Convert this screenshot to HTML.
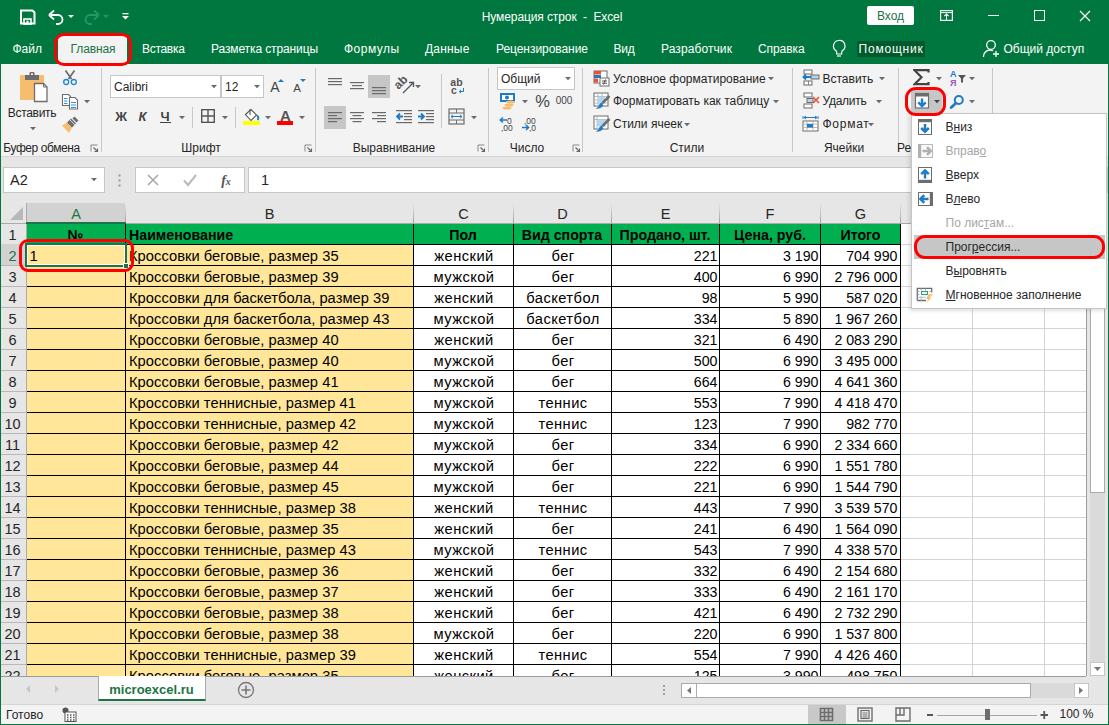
<!DOCTYPE html>
<html><head><meta charset="utf-8"><style>
html,body{margin:0;padding:0;width:1109px;height:725px;overflow:hidden;font-family:"Liberation Sans",sans-serif;}
body div, body svg{position:absolute;}
body div div{position:absolute;}
</style></head><body>
<div style="left:0px;top:0px;width:1109px;height:725px;background:#00773e;"></div>
<div style="left:252px;width:600px;text-align:center;top:8.84px;height:16px;line-height:16px;font-size:12px;color:#fff;font-weight:400;white-space:nowrap;font-family:'Liberation Sans', sans-serif;letter-spacing:-0.10px;">Нумерация строк&nbsp; -&nbsp; Excel</div>
<div style="left:12.5px;top:40.84px;height:16px;line-height:16px;font-size:12px;color:#fff;font-weight:400;white-space:nowrap;font-family:'Liberation Sans', sans-serif;letter-spacing:-0.00px;">Файл</div>
<div style="left:142px;top:40.84px;height:16px;line-height:16px;font-size:12px;color:#fff;font-weight:400;white-space:nowrap;font-family:'Liberation Sans', sans-serif;letter-spacing:-0.30px;">Вставка</div>
<div style="left:211px;top:40.84px;height:16px;line-height:16px;font-size:12px;color:#fff;font-weight:400;white-space:nowrap;font-family:'Liberation Sans', sans-serif;letter-spacing:-0.11px;">Разметка страницы</div>
<div style="left:344px;top:40.84px;height:16px;line-height:16px;font-size:12px;color:#fff;font-weight:400;white-space:nowrap;font-family:'Liberation Sans', sans-serif;letter-spacing:0.47px;">Формулы</div>
<div style="left:425px;top:40.84px;height:16px;line-height:16px;font-size:12px;color:#fff;font-weight:400;white-space:nowrap;font-family:'Liberation Sans', sans-serif;letter-spacing:0.19px;">Данные</div>
<div style="left:496px;top:40.84px;height:16px;line-height:16px;font-size:12px;color:#fff;font-weight:400;white-space:nowrap;font-family:'Liberation Sans', sans-serif;letter-spacing:-0.05px;">Рецензирование</div>
<div style="left:613.5px;top:40.84px;height:16px;line-height:16px;font-size:12px;color:#fff;font-weight:400;white-space:nowrap;font-family:'Liberation Sans', sans-serif;letter-spacing:-0.24px;">Вид</div>
<div style="left:661px;top:40.84px;height:16px;line-height:16px;font-size:12px;color:#fff;font-weight:400;white-space:nowrap;font-family:'Liberation Sans', sans-serif;letter-spacing:0.09px;">Разработчик</div>
<div style="left:758px;top:40.84px;height:16px;line-height:16px;font-size:12px;color:#fff;font-weight:400;white-space:nowrap;font-family:'Liberation Sans', sans-serif;letter-spacing:-0.08px;">Справка</div>
<div style="left:58px;top:36px;width:69px;height:28px;background:#f3f3f3;"></div>
<div style="left:70.5px;top:40.84px;height:16px;line-height:16px;font-size:12px;color:#217346;font-weight:400;white-space:nowrap;font-family:'Liberation Sans', sans-serif;letter-spacing:-0.10px;">Главная</div>
<div style="left:1px;top:64px;width:1107px;height:92px;background:#f3f3f3;"></div>
<div style="left:1px;top:156px;width:1107px;height:1px;background:#d5d5d5;"></div>
<svg style="left:19px;top:9px;" width="17" height="16" viewBox="0 0 17 16"><path d="M2 1.5h11.5l2 2v11h-13.5z" fill="none" stroke="#fff" stroke-width="2"/><rect x="5" y="10" width="7" height="5" fill="none" stroke="#fff" stroke-width="1.6"/><rect x="7.5" y="11.5" width="2" height="3.5" fill="#fff"/></svg>
<svg style="left:48px;top:9px;" width="17" height="16" viewBox="0 0 17 16"><path d="M3 6 H10 A4.5 4.5 0 0 1 10 15 H8" fill="none" stroke="#fff" stroke-width="1.8"/><path d="M1 6 L6 1.5 M1 6 L6 10.5" stroke="#fff" stroke-width="1.8" fill="none"/></svg>
<svg style="left:67px;top:14px;" width="8" height="5" viewBox="0 0 8 5"><polygon points="1,1 7,1 4,4" fill="#fff"/></svg>
<svg style="left:83px;top:9px;" width="17" height="16" viewBox="0 0 17 16"><path d="M14 6 H7 A4.5 4.5 0 0 0 7 15 H9" fill="none" stroke="#1f9a6a" stroke-width="1.8"/><path d="M16 6 L11 1.5 M16 6 L11 10.5" stroke="#1f9a6a" stroke-width="1.8" fill="none"/></svg>
<svg style="left:102px;top:14px;" width="8" height="5" viewBox="0 0 8 5"><polygon points="1,1 7,1 4,4" fill="#1f9a6a"/></svg>
<svg style="left:121px;top:12px;" width="9" height="9" viewBox="0 0 9 9"><rect x="1.5" y="1" width="6" height="1.3" fill="#fff"/><polygon points="1,4 8,4 4.5,7.5" fill="#fff"/></svg>
<div style="left:867px;top:6px;width:47px;height:19px;background:#fff;border-radius:2px"></div>
<div style="left:590.5px;width:600px;text-align:center;top:7.84px;height:16px;line-height:16px;font-size:12px;color:#217346;font-weight:400;white-space:nowrap;font-family:'Liberation Sans', sans-serif;">Вход</div>
<svg style="left:939px;top:9px;" width="15" height="13" viewBox="0 0 15 13"><rect x="1.6" y="1.6" width="11.8" height="9.8" fill="none" stroke="#fff" stroke-width="1.2"/><path d="M2 3.6h11" stroke="#fff" stroke-width="1"/><path d="M7.5 11.5V4.8M5.3 7.2L7.5 5l2.2 2.2" fill="none" stroke="#fff" stroke-width="1.1"/></svg>
<div style="left:988px;top:15px;width:11px;height:1px;background:#fff;"></div>
<div style="left:1034px;top:10px;width:11px;height:11px;box-sizing:border-box;border:1px solid #fff;background:transparent;"></div>
<svg style="left:1079px;top:10px;" width="12" height="12" viewBox="0 0 12 12"><path d="M1 1L11 11M11 1L1 11" stroke="#fff" stroke-width="1.2"/></svg>
<svg style="left:831px;top:39px;" width="16" height="19" viewBox="0 0 16 19"><path d="M8 1.5a5.5 5.5 0 0 0 -3.2 10c.6.5.9 1.2.9 2V15h5v-1.5c0-.8.3-1.5.9-2A5.5 5.5 0 0 0 8 1.5z" fill="none" stroke="#fff" stroke-width="1.2"/><path d="M6 17h4" stroke="#fff" stroke-width="1.2"/></svg>
<div style="left:857px;top:41px;width:68px;height:16px;background:#005a2c;"></div>
<div style="left:858.5px;top:40.84px;height:16px;line-height:16px;font-size:12px;color:#fff;font-weight:400;white-space:nowrap;font-family:'Liberation Sans', sans-serif;letter-spacing:0.79px;">Помощник</div>
<svg style="left:982px;top:39px;" width="19" height="19" viewBox="0 0 19 19"><circle cx="9" cy="6" r="4.3" fill="none" stroke="#fff" stroke-width="1.3"/><path d="M1.5 18c0-4 2.8-7 6.5-7 1.2 0 2.2.3 3 .8" fill="none" stroke="#fff" stroke-width="1.3"/><path d="M14 12v6M11 15h6" stroke="#fff" stroke-width="1.3"/></svg>
<div style="left:1003.5px;top:40.84px;height:16px;line-height:16px;font-size:12px;color:#fff;font-weight:400;white-space:nowrap;font-family:'Liberation Sans', sans-serif;">Общий доступ</div>
<div style="left:54px;top:33px;width:78px;height:33px;box-sizing:border-box;border:3px solid #ff0000;background:transparent;border-radius:10px"></div>
<div style="left:101px;top:68px;width:1px;height:84px;background:#c8c8c8;"></div>
<div style="left:315px;top:68px;width:1px;height:84px;background:#c8c8c8;"></div>
<div style="left:488px;top:68px;width:1px;height:84px;background:#c8c8c8;"></div>
<div style="left:582px;top:68px;width:1px;height:84px;background:#c8c8c8;"></div>
<div style="left:792px;top:68px;width:1px;height:84px;background:#c8c8c8;"></div>
<div style="left:898px;top:68px;width:1px;height:84px;background:#c8c8c8;"></div>
<div style="left:992px;top:68px;width:1px;height:84px;background:#c8c8c8;"></div>
<div style="left:-258.5px;width:600px;text-align:center;top:139.84px;height:16px;line-height:16px;font-size:12px;color:#262626;font-weight:400;white-space:nowrap;font-family:'Liberation Sans', sans-serif;letter-spacing:-0.42px;">Буфер обмена</div>
<div style="left:-99px;width:600px;text-align:center;top:139.84px;height:16px;line-height:16px;font-size:12px;color:#262626;font-weight:400;white-space:nowrap;font-family:'Liberation Sans', sans-serif;">Шрифт</div>
<div style="left:94px;width:600px;text-align:center;top:139.84px;height:16px;line-height:16px;font-size:12px;color:#262626;font-weight:400;white-space:nowrap;font-family:'Liberation Sans', sans-serif;">Выравнивание</div>
<div style="left:227px;width:600px;text-align:center;top:139.84px;height:16px;line-height:16px;font-size:12px;color:#262626;font-weight:400;white-space:nowrap;font-family:'Liberation Sans', sans-serif;">Число</div>
<div style="left:387px;width:600px;text-align:center;top:139.84px;height:16px;line-height:16px;font-size:12px;color:#262626;font-weight:400;white-space:nowrap;font-family:'Liberation Sans', sans-serif;">Стили</div>
<div style="left:544px;width:600px;text-align:center;top:139.84px;height:16px;line-height:16px;font-size:12px;color:#262626;font-weight:400;white-space:nowrap;font-family:'Liberation Sans', sans-serif;">Ячейки</div>
<div style="left:897px;top:139.84px;height:16px;line-height:16px;font-size:12px;color:#262626;font-weight:400;white-space:nowrap;font-family:'Liberation Sans', sans-serif;">Ре</div>
<svg style="left:89.5px;top:144px;" width="9" height="9" viewBox="0 0 9 9"><path d="M1 7.5V1h6.5" fill="none" stroke="#888" stroke-width="1"/><path d="M3.5 3.5L7.5 7.5M4.5 7.5h3v-3" fill="none" stroke="#666" stroke-width="1.1"/></svg>
<svg style="left:304px;top:144px;" width="9" height="9" viewBox="0 0 9 9"><path d="M1 7.5V1h6.5" fill="none" stroke="#888" stroke-width="1"/><path d="M3.5 3.5L7.5 7.5M4.5 7.5h3v-3" fill="none" stroke="#666" stroke-width="1.1"/></svg>
<svg style="left:477px;top:144px;" width="9" height="9" viewBox="0 0 9 9"><path d="M1 7.5V1h6.5" fill="none" stroke="#888" stroke-width="1"/><path d="M3.5 3.5L7.5 7.5M4.5 7.5h3v-3" fill="none" stroke="#666" stroke-width="1.1"/></svg>
<svg style="left:572px;top:144px;" width="9" height="9" viewBox="0 0 9 9"><path d="M1 7.5V1h6.5" fill="none" stroke="#888" stroke-width="1"/><path d="M3.5 3.5L7.5 7.5M4.5 7.5h3v-3" fill="none" stroke="#666" stroke-width="1.1"/></svg>
<svg style="left:19px;top:71px;" width="30" height="32" viewBox="0 0 30 32"><rect x="1" y="4" width="24" height="25" rx="1" fill="#f6bd6f"/><rect x="6" y="4" width="14" height="5" fill="#6d6d6d"/><rect x="10.5" y="1" width="5" height="4" rx="1" fill="#6d6d6d"/><rect x="12" y="2.3" width="2" height="1.6" fill="#f3f3f3"/><path d="M15.5 12.5h9l3.5 3.5v14.5h-12.5z" fill="#fff" stroke="#6d6d6d" stroke-width="1.3"/><path d="M24.5 12.5v3.5h3.5" fill="none" stroke="#6d6d6d" stroke-width="1"/></svg>
<div style="left:-268px;width:600px;text-align:center;top:104.84px;height:16px;line-height:16px;font-size:12px;color:#262626;font-weight:400;white-space:nowrap;font-family:'Liberation Sans', sans-serif;letter-spacing:-0.32px;">Вставить</div>
<svg style="left:29.5px;top:127px;" width="6" height="4" viewBox="0 0 6 4"><polygon points="0,0 6,0 3,3.2" fill="#6a6a6a"/></svg>
<svg style="left:62px;top:70px;" width="16" height="16" viewBox="0 0 16 16"><path d="M3.5 0.5L9.5 9M12.5 0.5L6.5 9" stroke="#6d6d6d" stroke-width="1.7"/><circle cx="4.2" cy="12" r="2.5" fill="none" stroke="#1e88d2" stroke-width="1.3"/><circle cx="11.8" cy="12" r="2.5" fill="none" stroke="#1e88d2" stroke-width="1.3"/></svg>
<svg style="left:61px;top:93px;" width="18" height="17" viewBox="0 0 18 17"><path d="M1.5 1.5h6l2 2v9h-8z" fill="#fff" stroke="#6d6d6d" stroke-width="1.1"/><path d="M3 5.5h3.5M3 8h3.5M3 10.5h3.5" stroke="#1e88d2" stroke-width="0.9"/><path d="M8.5 4.5h5.5l2.5 2.5v9h-8z" fill="#fff" stroke="#6d6d6d" stroke-width="1.1"/><path d="M10 9.5h5M10 12h5M10 14.5h5" stroke="#1e88d2" stroke-width="0.9"/></svg>
<svg style="left:84px;top:100px;" width="6" height="4" viewBox="0 0 6 4"><polygon points="0,0 6,0 3,3.2" fill="#6a6a6a"/></svg>
<svg style="left:61px;top:116px;" width="18" height="17" viewBox="0 0 18 17"><path d="M1 9.5l5-3 5 5-3 5.5z" fill="#f6bd6f"/><path d="M6 6.5l4-4 5 5-4 4z" fill="#6d6d6d"/><path d="M11.5 2.5l2-2 4 4-2 2z" fill="#6d6d6d"/><path d="M8.5 3.5l5.5 5.5" stroke="#f3f3f3" stroke-width="0.8"/></svg>
<div style="left:110px;top:75px;width:111px;height:23px;box-sizing:border-box;border:1px solid #c6c6c6;background:#fff;"></div>
<div style="left:114px;top:78.84px;height:16px;line-height:16px;font-size:12px;color:#262626;font-weight:400;white-space:nowrap;font-family:'Liberation Sans', sans-serif;">Calibri</div>
<svg style="left:211px;top:85px;" width="6" height="4" viewBox="0 0 6 4"><polygon points="0,0 6,0 3,3.2" fill="#6a6a6a"/></svg>
<div style="left:221px;top:75px;width:43px;height:23px;box-sizing:border-box;border:1px solid #c6c6c6;background:#fff;"></div>
<div style="left:225px;top:78.84px;height:16px;line-height:16px;font-size:12px;color:#262626;font-weight:400;white-space:nowrap;font-family:'Liberation Sans', sans-serif;">12</div>
<svg style="left:254px;top:85px;" width="6" height="4" viewBox="0 0 6 4"><polygon points="0,0 6,0 3,3.2" fill="#6a6a6a"/></svg>
<div style="left:-25px;width:600px;text-align:center;top:78.15px;height:18px;line-height:18px;font-size:14px;color:#444444;font-weight:400;white-space:nowrap;font-family:'Liberation Sans', sans-serif;">A</div>
<svg style="left:278px;top:79px;" width="6" height="4" viewBox="0 0 6 4"><polygon points="0,3 6,3 3,0" fill="#1e7bc6"/></svg>
<div style="left:-3px;width:600px;text-align:center;top:80.52px;height:15px;line-height:15px;font-size:11.5px;color:#444444;font-weight:400;white-space:nowrap;font-family:'Liberation Sans', sans-serif;">A</div>
<svg style="left:300px;top:79px;" width="6" height="4" viewBox="0 0 6 4"><polygon points="0,0 6,0 3,3" fill="#1e7bc6"/></svg>
<div style="left:-179px;width:600px;text-align:center;top:108.00px;height:17px;line-height:17px;font-size:13px;color:#444444;font-weight:700;white-space:nowrap;font-family:'Liberation Sans', sans-serif;">Ж</div>
<div style="left:-157.5px;width:600px;text-align:center;top:108.00px;height:17px;line-height:17px;font-size:13px;color:#444444;font-weight:700;white-space:nowrap;font-family:'Liberation Sans', sans-serif;font-style:italic">К</div>
<div style="left:-135px;width:600px;text-align:center;top:108.00px;height:17px;line-height:17px;font-size:13px;color:#444444;font-weight:700;white-space:nowrap;font-family:'Liberation Sans', sans-serif;">Ч</div>
<div style="left:160px;top:122px;width:11px;height:1.3px;background:#444444;"></div>
<svg style="left:179px;top:116px;" width="6" height="4" viewBox="0 0 6 4"><polygon points="0,0 6,0 3,3.2" fill="#6a6a6a"/></svg>
<div style="left:192px;top:107px;width:1px;height:21px;background:#c8c8c8;"></div>
<svg style="left:201px;top:109px;" width="14" height="14" viewBox="0 0 14 14"><rect x="0.7" y="0.7" width="12.6" height="12.6" fill="none" stroke="#555" stroke-width="1.4"/><path d="M7 1v12M1 7h12" stroke="#555" stroke-width="1.4"/></svg>
<svg style="left:222px;top:116px;" width="6" height="4" viewBox="0 0 6 4"><polygon points="0,0 6,0 3,3.2" fill="#6a6a6a"/></svg>
<div style="left:235px;top:107px;width:1px;height:21px;background:#c8c8c8;"></div>
<svg style="left:243px;top:108px;" width="18" height="18" viewBox="0 0 18 18"><path d="M2.5 6.5l5.5-5 5.5 5.5-5.5 5.5z" fill="#fff" stroke="#555" stroke-width="1.1"/><path d="M7 1v6" stroke="#555" stroke-width="1.1"/><path d="M14 7.5c1.5 1 1.8 3 .6 4.5" fill="none" stroke="#1e7bc6" stroke-width="2"/><rect x="0" y="13" width="17" height="4" fill="#ffff00"/></svg>
<svg style="left:265px;top:116px;" width="6" height="4" viewBox="0 0 6 4"><polygon points="0,0 6,0 3,3.2" fill="#6a6a6a"/></svg>
<div style="left:-14.5px;width:600px;text-align:center;top:105.80px;height:20px;line-height:20px;font-size:15px;color:#555;font-weight:700;white-space:nowrap;font-family:'Liberation Sans', sans-serif;">A</div>
<div style="left:277px;top:121px;width:16px;height:4px;background:#ff0000;"></div>
<svg style="left:299px;top:116px;" width="6" height="4" viewBox="0 0 6 4"><polygon points="0,0 6,0 3,3.2" fill="#6a6a6a"/></svg>
<svg style="left:328px;top:78px;" width="14" height="10" viewBox="0 0 14 10"><rect x="0" y="0" width="14" height="1.2" fill="#6a6a6a"/><rect x="0" y="3" width="14" height="1.2" fill="#6a6a6a"/><rect x="0" y="6" width="14" height="1.2" fill="#6a6a6a"/></svg>
<svg style="left:350px;top:82px;" width="14" height="10" viewBox="0 0 14 10"><rect x="0.0" y="0" width="14" height="1.2" fill="#6a6a6a"/><rect x="2.0" y="3" width="10" height="1.2" fill="#6a6a6a"/><rect x="0.0" y="6" width="14" height="1.2" fill="#6a6a6a"/></svg>
<div style="left:368px;top:75px;width:22px;height:23px;background:#c6c6c6;"></div>
<svg style="left:372px;top:87px;" width="14" height="10" viewBox="0 0 14 10"><rect x="0" y="0" width="14" height="1.2" fill="#6a6a6a"/><rect x="0" y="3" width="14" height="1.2" fill="#6a6a6a"/><rect x="0" y="6" width="14" height="1.2" fill="#6a6a6a"/></svg>
<svg style="left:394px;top:73px;" width="22" height="22" viewBox="0 0 22 22"><text x="0" y="0" transform="translate(4.5,17) rotate(-45)" font-family="Liberation Sans" font-size="12" font-weight="700" fill="#555">ab</text><path d="M9 20L19 10M15 9.5H19.5v4.5" fill="none" stroke="#555" stroke-width="1.3"/></svg>
<svg style="left:415px;top:85px;" width="6" height="4" viewBox="0 0 6 4"><polygon points="0,0 6,0 3,3.2" fill="#6a6a6a"/></svg>
<div style="left:324px;top:106px;width:22px;height:23px;background:#c6c6c6;"></div>
<svg style="left:328px;top:112px;" width="14" height="13" viewBox="0 0 14 13"><rect x="0" y="0" width="14" height="1.2" fill="#6a6a6a"/><rect x="0" y="3" width="9" height="1.2" fill="#6a6a6a"/><rect x="0" y="6" width="14" height="1.2" fill="#6a6a6a"/><rect x="0" y="9" width="9" height="1.2" fill="#6a6a6a"/></svg>
<svg style="left:350px;top:112px;" width="14" height="13" viewBox="0 0 14 13"><rect x="0.0" y="0" width="14" height="1.2" fill="#6a6a6a"/><rect x="2.5" y="3" width="9" height="1.2" fill="#6a6a6a"/><rect x="0.0" y="6" width="14" height="1.2" fill="#6a6a6a"/><rect x="2.5" y="9" width="9" height="1.2" fill="#6a6a6a"/></svg>
<svg style="left:372px;top:112px;" width="14" height="13" viewBox="0 0 14 13"><rect x="0" y="0" width="14" height="1.2" fill="#6a6a6a"/><rect x="5" y="3" width="9" height="1.2" fill="#6a6a6a"/><rect x="0" y="6" width="14" height="1.2" fill="#6a6a6a"/><rect x="5" y="9" width="9" height="1.2" fill="#6a6a6a"/></svg>
<svg style="left:396px;top:109px;" width="17" height="15" viewBox="0 0 17 15"><rect x="0" y="1" width="16" height="1.2" fill="#6a6a6a"/><rect x="8" y="4" width="8" height="1.2" fill="#6a6a6a"/><rect x="8" y="7" width="8" height="1.2" fill="#6a6a6a"/><rect x="8" y="10" width="8" height="1.2" fill="#6a6a6a"/><rect x="0" y="13" width="16" height="1.2" fill="#6a6a6a"/><path d="M1 7.5h6M4 4.5l-3 3 3 3" fill="none" stroke="#1e7bc6" stroke-width="1.8"/></svg>
<svg style="left:418px;top:109px;" width="17" height="15" viewBox="0 0 17 15"><rect x="0" y="1" width="16" height="1.2" fill="#6a6a6a"/><rect x="8" y="4" width="8" height="1.2" fill="#6a6a6a"/><rect x="8" y="7" width="8" height="1.2" fill="#6a6a6a"/><rect x="8" y="10" width="8" height="1.2" fill="#6a6a6a"/><rect x="0" y="13" width="16" height="1.2" fill="#6a6a6a"/><path d="M0 7.5h6M3 4.5l3 3-3 3" fill="none" stroke="#1e7bc6" stroke-width="1.8"/></svg>
<div style="left:441px;top:74px;width:1px;height:54px;background:#c8c8c8;"></div>
<div style="left:156.5px;width:600px;text-align:center;top:74.86px;height:14px;line-height:14px;font-size:10.5px;color:#555;font-weight:700;white-space:nowrap;font-family:'Liberation Sans', sans-serif;">ab</div>
<div style="left:154px;width:600px;text-align:center;top:82.86px;height:14px;line-height:14px;font-size:10.5px;color:#555;font-weight:700;white-space:nowrap;font-family:'Liberation Sans', sans-serif;">c</div>
<svg style="left:458px;top:88px;" width="7" height="6" viewBox="0 0 7 6"><path d="M5.5 0v3.5H1.5M3 1.8L1.2 3.5 3 5.2" fill="none" stroke="#1e7bc6" stroke-width="1"/></svg>
<svg style="left:448px;top:108px;" width="17" height="17" viewBox="0 0 17 17"><rect x="1" y="1" width="15" height="15" fill="none" stroke="#6d6d6d" stroke-width="1.2"/><path d="M1 5h15M1 12h15M8.5 1v4M8.5 12v4" stroke="#6d6d6d" stroke-width="1"/><path d="M3 8.5h11M5 6.8L3 8.5 5 10.2M12 6.8l2 1.7-2 1.7" fill="none" stroke="#1e7bc6" stroke-width="1"/></svg>
<svg style="left:471px;top:116px;" width="6" height="4" viewBox="0 0 6 4"><polygon points="0,0 6,0 3,3.2" fill="#6a6a6a"/></svg>
<div style="left:497px;top:67px;width:78px;height:23px;box-sizing:border-box;border:1px solid #c6c6c6;background:#fff;"></div>
<div style="left:501px;top:70.84px;height:16px;line-height:16px;font-size:12px;color:#262626;font-weight:400;white-space:nowrap;font-family:'Liberation Sans', sans-serif;">Общий</div>
<svg style="left:565px;top:77px;" width="6" height="4" viewBox="0 0 6 4"><polygon points="0,0 6,0 3,3.2" fill="#6a6a6a"/></svg>
<svg style="left:499px;top:92px;" width="18" height="18" viewBox="0 0 18 18"><rect x="1" y="1" width="15" height="9" fill="#1e7bc6"/><rect x="3" y="3" width="11" height="5" fill="#fff"/><circle cx="8" cy="5.5" r="2" fill="#1e7bc6"/><ellipse cx="11.5" cy="10" rx="4.5" ry="1.5" fill="#f6bd6f"/><ellipse cx="10" cy="13" rx="4.5" ry="1.5" fill="#f6bd6f"/><ellipse cx="8" cy="16" rx="4.5" ry="1.5" fill="#f6bd6f"/></svg>
<svg style="left:522px;top:100px;" width="6" height="4" viewBox="0 0 6 4"><polygon points="0,0 6,0 3,3.2" fill="#6a6a6a"/></svg>
<div style="left:242.5px;width:600px;text-align:center;top:91.28px;height:21px;line-height:21px;font-size:16.5px;color:#444;font-weight:400;white-space:nowrap;font-family:'Liberation Sans', sans-serif;">%</div>
<div style="left:264px;width:600px;text-align:center;top:94.03px;height:13px;line-height:13px;font-size:10px;color:#444;font-weight:400;white-space:nowrap;font-family:'Liberation Sans', sans-serif;">000</div>
<svg style="left:499px;top:116px;" width="17" height="16" viewBox="0 0 17 16"><path d="M1 4h7M4 1.5L1.2 4 4 6.5" fill="none" stroke="#1e7bc6" stroke-width="1.5"/><text x="8" y="8" font-family="Liberation Sans" font-size="8.5" fill="#444">0</text><text x="2" y="15" font-family="Liberation Sans" font-size="8.5" fill="#444">,00</text></svg>
<svg style="left:521px;top:116px;" width="17" height="16" viewBox="0 0 17 16"><text x="3" y="8" font-family="Liberation Sans" font-size="8.5" fill="#444">,00</text><path d="M1 11.5h6M5 9l2.6 2.5L5 14" fill="none" stroke="#1e7bc6" stroke-width="1.5"/><text x="8" y="15" font-family="Liberation Sans" font-size="8.5" fill="#444">,0</text></svg>
<svg style="left:593px;top:70px;" width="18" height="17" viewBox="0 0 18 17"><rect x="1" y="1" width="13" height="12" fill="#fff" stroke="#6d6d6d" stroke-width="1"/><rect x="1" y="1" width="7" height="3.5" fill="#f05032"/><rect x="1" y="5" width="7" height="3" fill="#1e7bc6"/><rect x="1" y="8.5" width="4" height="4" fill="#f05032"/><rect x="7" y="8" width="9" height="8" fill="#fff" stroke="#6d6d6d" stroke-width="1"/><path d="M9 11h5M9 13.2h5M12.5 9.5l-2 5" stroke="#444" stroke-width="0.9"/></svg>
<div style="left:613px;top:70.84px;height:16px;line-height:16px;font-size:12px;color:#262626;font-weight:400;white-space:nowrap;font-family:'Liberation Sans', sans-serif;">Условное форматирование</div>
<svg style="left:768px;top:77px;" width="6" height="4" viewBox="0 0 6 4"><polygon points="0,0 6,0 3,3.2" fill="#6a6a6a"/></svg>
<svg style="left:593px;top:92px;" width="18" height="18" viewBox="0 0 18 18"><rect x="1" y="1" width="14" height="13" fill="#fff" stroke="#6d6d6d" stroke-width="1"/><path d="M1 4.5h14M1 8h14M1 11h14M5 1v13M9 1v13" stroke="#aaa" stroke-width="0.8"/><rect x="5" y="4.5" width="7" height="6" fill="#b4d4ef"/><path d="M16.5 4l-7 7" stroke="#6d6d6d" stroke-width="2.5"/><path d="M9.5 10.5c-2 0-3.5 1.5-3.5 3.5-1 1-2 2-3.5 2.5 3 .5 6-.5 7.5-2.5z" fill="#1e7bc6"/></svg>
<div style="left:613px;top:93.34px;height:16px;line-height:16px;font-size:12px;color:#262626;font-weight:400;white-space:nowrap;font-family:'Liberation Sans', sans-serif;">Форматировать как таблицу</div>
<svg style="left:773px;top:100px;" width="6" height="4" viewBox="0 0 6 4"><polygon points="0,0 6,0 3,3.2" fill="#6a6a6a"/></svg>
<svg style="left:593px;top:115px;" width="18" height="18" viewBox="0 0 18 18"><rect x="1" y="1" width="14" height="13" fill="#fff" stroke="#6d6d6d" stroke-width="1"/><path d="M1 4.5h14M4 1v13" stroke="#aaa" stroke-width="0.8"/><rect x="4" y="4.5" width="9" height="7" fill="#b4d4ef"/><path d="M16.5 4l-7 7" stroke="#6d6d6d" stroke-width="2.5"/><path d="M9.5 10.5c-2 0-3.5 1.5-3.5 3.5-1 1-2 2-3.5 2.5 3 .5 6-.5 7.5-2.5z" fill="#1e7bc6"/></svg>
<div style="left:613px;top:115.84px;height:16px;line-height:16px;font-size:12px;color:#262626;font-weight:400;white-space:nowrap;font-family:'Liberation Sans', sans-serif;">Стили ячеек</div>
<svg style="left:684px;top:123px;" width="6" height="4" viewBox="0 0 6 4"><polygon points="0,0 6,0 3,3.2" fill="#6a6a6a"/></svg>
<svg style="left:802px;top:69px;" width="18" height="18" viewBox="0 0 18 18"><rect x="2" y="1" width="8" height="4" fill="#fff" stroke="#6d6d6d" stroke-width="1"/><rect x="2" y="12" width="8" height="4" fill="#fff" stroke="#6d6d6d" stroke-width="1"/><rect x="6" y="12" width="0.8" height="4" fill="#6d6d6d"/><rect x="9" y="6" width="8" height="4" fill="#b4d4ef" stroke="#6d6d6d" stroke-width="1"/><path d="M9 8H1.5M4 5.5L1.5 8 4 10.5" fill="none" stroke="#1e7bc6" stroke-width="1.8"/></svg>
<div style="left:822.5px;top:70.84px;height:16px;line-height:16px;font-size:12px;color:#262626;font-weight:400;white-space:nowrap;font-family:'Liberation Sans', sans-serif;">Вставить</div>
<svg style="left:879px;top:77px;" width="6" height="4" viewBox="0 0 6 4"><polygon points="0,0 6,0 3,3.2" fill="#6a6a6a"/></svg>
<svg style="left:802px;top:92px;" width="18" height="18" viewBox="0 0 18 18"><rect x="2" y="1" width="8" height="4" fill="#fff" stroke="#6d6d6d" stroke-width="1"/><rect x="2" y="12" width="8" height="4" fill="#fff" stroke="#6d6d6d" stroke-width="1"/><rect x="5" y="6.5" width="6" height="4" fill="#b4d4ef" stroke="#6d6d6d" stroke-width="1"/><path d="M11 5l6 6M17 5l-6 6" stroke="#f05032" stroke-width="1.6"/></svg>
<div style="left:822.5px;top:93.34px;height:16px;line-height:16px;font-size:12px;color:#262626;font-weight:400;white-space:nowrap;font-family:'Liberation Sans', sans-serif;letter-spacing:-0.26px;">Удалить</div>
<svg style="left:876px;top:100px;" width="6" height="4" viewBox="0 0 6 4"><polygon points="0,0 6,0 3,3.2" fill="#6a6a6a"/></svg>
<svg style="left:802px;top:115px;" width="18" height="18" viewBox="0 0 18 18"><path d="M1 1v3M16 1v3M2 2.5h13M4 1l-2 1.5L4 4M13 1l2 1.5L13 4" fill="none" stroke="#1e7bc6" stroke-width="1"/><rect x="1" y="6" width="15" height="10" fill="#fff" stroke="#6d6d6d" stroke-width="1"/><path d="M1 9h15M1 12.5h15M5 6v10M11 6v10" stroke="#aaa" stroke-width="0.8"/><rect x="5" y="9" width="6" height="3.5" fill="#1e7bc6"/></svg>
<div style="left:822.5px;top:115.84px;height:16px;line-height:16px;font-size:12px;color:#262626;font-weight:400;white-space:nowrap;font-family:'Liberation Sans', sans-serif;letter-spacing:0.73px;">Формат</div>
<svg style="left:868px;top:123px;" width="6" height="4" viewBox="0 0 6 4"><polygon points="0,0 6,0 3,3.2" fill="#6a6a6a"/></svg>
<svg style="left:913px;top:69px;" width="17" height="17" viewBox="0 0 17 17"><path d="M15.5 3.5V1.2H1.5L8.5 8.2 1.5 15.2h14v-2.3" fill="none" stroke="#444" stroke-width="2.2" stroke-linejoin="miter"/></svg>
<svg style="left:936px;top:77px;" width="6" height="4" viewBox="0 0 6 4"><polygon points="0,0 6,0 3,3.2" fill="#6a6a6a"/></svg>
<svg style="left:948px;top:68px;" width="20" height="19" viewBox="0 0 20 19"><text x="2" y="9" font-family="Liberation Sans" font-size="9" font-weight="700" fill="#1e7bc6">A</text><text x="2" y="17.5" font-family="Liberation Sans" font-size="9" font-weight="700" fill="#9b59b6">Я</text><path d="M10 7h8l-3 3.5v4h-2v-4z" fill="#555"/></svg>
<svg style="left:969px;top:77px;" width="6" height="4" viewBox="0 0 6 4"><polygon points="0,0 6,0 3,3.2" fill="#6a6a6a"/></svg>
<div style="left:911px;top:90px;width:31px;height:23px;background:#c6c6c6;border-radius:3px"></div>
<svg style="left:914px;top:92px;" width="16" height="17" viewBox="0 0 16 17"><rect x="1.5" y="1.5" width="13" height="14.5" fill="#fff" stroke="#6d6d6d" stroke-width="1.2"/><rect x="1" y="1" width="14" height="3.5" fill="#6d6d6d"/><path d="M8 6.5v7.5M4.3 10.3L8 14l3.7-3.7" fill="none" stroke="#1e7bc6" stroke-width="2.4"/></svg>
<svg style="left:933.5px;top:100px;" width="6" height="4" viewBox="0 0 6 4"><polygon points="0,0 6,0 3,3.2" fill="#444"/></svg>
<svg style="left:949px;top:94px;" width="16" height="15" viewBox="0 0 16 15"><circle cx="9.8" cy="6" r="4" fill="none" stroke="#1e7bc6" stroke-width="2"/><path d="M6.8 9.2L2.2 13.5" stroke="#1e7bc6" stroke-width="2.8" stroke-linecap="round"/></svg>
<svg style="left:969px;top:100px;" width="6" height="4" viewBox="0 0 6 4"><polygon points="0,0 6,0 3,3.2" fill="#6a6a6a"/></svg>
<div style="left:1px;top:157px;width:1107px;height:46px;background:#e6e6e6;"></div>
<div style="left:3px;top:167px;width:102px;height:26px;box-sizing:border-box;border:1px solid #c6c6c6;background:#fff;"></div>
<div style="left:10px;top:171.48px;height:19px;line-height:19px;font-size:14.5px;color:#262626;font-weight:400;white-space:nowrap;font-family:'Liberation Sans', sans-serif;">A2</div>
<svg style="left:91px;top:178px;" width="6" height="4" viewBox="0 0 6 4"><polygon points="0,0 6,0 3,3.2" fill="#6a6a6a"/></svg>
<svg style="left:118px;top:174px;" width="4" height="13" viewBox="0 0 4 13"><rect x="0.5" y="0.5" width="2" height="2" fill="#999"/><rect x="0.5" y="5.5" width="2" height="2" fill="#999"/><rect x="0.5" y="10.5" width="2" height="2" fill="#999"/></svg>
<div style="left:135px;top:167px;width:110px;height:26px;box-sizing:border-box;border:1px solid #c6c6c6;background:#fff;"></div>
<svg style="left:146px;top:173px;" width="14" height="14" viewBox="0 0 14 14"><path d="M2 2L12 12M12 2L2 12" stroke="#a6a6a6" stroke-width="1.5"/></svg>
<svg style="left:182px;top:173px;" width="16" height="14" viewBox="0 0 16 14"><path d="M2 7.5l4 4.5L14 2" fill="none" stroke="#bdbdbd" stroke-width="2.2"/></svg>
<div style="left:-74px;width:600px;text-align:center;top:172.15px;height:18px;line-height:18px;font-size:14px;color:#555;font-weight:700;white-space:nowrap;font-family:'Liberation Serif', serif;"><i>f</i><span style="font-size:10px;position:static"><i>x</i></span></div>
<div style="left:248px;top:167px;width:860px;height:26px;box-sizing:border-box;border:1px solid #c6c6c6;background:#fff;"></div>
<div style="left:261px;top:171.48px;height:19px;line-height:19px;font-size:14.5px;color:#262626;font-weight:400;white-space:nowrap;font-family:'Liberation Sans', sans-serif;">1</div>
<div style="left:1px;top:203px;width:1085px;height:473px;background:#fff;"></div>
<div style="left:1px;top:203px;width:1085px;height:20px;background:#e6e6e6;"></div>
<div style="left:1px;top:203px;width:25px;height:473px;background:#e6e6e6;"></div>
<div style="left:26px;top:223px;width:875px;height:21px;background:#00b050;"></div>
<div style="left:26px;top:244px;width:387px;height:432px;background:#ffe699;"></div>
<div style="left:972px;top:223px;width:1px;height:453px;background:#d4d4d4;"></div>
<div style="left:1044px;top:223px;width:1px;height:453px;background:#d4d4d4;"></div>
<div style="left:901px;top:244px;width:185px;height:1px;background:#d4d4d4;"></div>
<div style="left:901px;top:265px;width:185px;height:1px;background:#d4d4d4;"></div>
<div style="left:901px;top:286px;width:185px;height:1px;background:#d4d4d4;"></div>
<div style="left:901px;top:307px;width:185px;height:1px;background:#d4d4d4;"></div>
<div style="left:901px;top:328px;width:185px;height:1px;background:#d4d4d4;"></div>
<div style="left:901px;top:349px;width:185px;height:1px;background:#d4d4d4;"></div>
<div style="left:901px;top:370px;width:185px;height:1px;background:#d4d4d4;"></div>
<div style="left:901px;top:391px;width:185px;height:1px;background:#d4d4d4;"></div>
<div style="left:901px;top:412px;width:185px;height:1px;background:#d4d4d4;"></div>
<div style="left:901px;top:433px;width:185px;height:1px;background:#d4d4d4;"></div>
<div style="left:901px;top:454px;width:185px;height:1px;background:#d4d4d4;"></div>
<div style="left:901px;top:475px;width:185px;height:1px;background:#d4d4d4;"></div>
<div style="left:901px;top:496px;width:185px;height:1px;background:#d4d4d4;"></div>
<div style="left:901px;top:517px;width:185px;height:1px;background:#d4d4d4;"></div>
<div style="left:901px;top:538px;width:185px;height:1px;background:#d4d4d4;"></div>
<div style="left:901px;top:559px;width:185px;height:1px;background:#d4d4d4;"></div>
<div style="left:901px;top:580px;width:185px;height:1px;background:#d4d4d4;"></div>
<div style="left:901px;top:601px;width:185px;height:1px;background:#d4d4d4;"></div>
<div style="left:901px;top:622px;width:185px;height:1px;background:#d4d4d4;"></div>
<div style="left:901px;top:643px;width:185px;height:1px;background:#d4d4d4;"></div>
<div style="left:901px;top:664px;width:185px;height:1px;background:#d4d4d4;"></div>
<div style="left:901px;top:244px;width:185px;height:1px;background:#d4d4d4;"></div>
<div style="left:125px;top:223px;width:1px;height:453px;background:#000;"></div>
<div style="left:413px;top:223px;width:1px;height:453px;background:#000;"></div>
<div style="left:513px;top:223px;width:1px;height:453px;background:#000;"></div>
<div style="left:611px;top:223px;width:1px;height:453px;background:#000;"></div>
<div style="left:719px;top:223px;width:1px;height:453px;background:#000;"></div>
<div style="left:820px;top:223px;width:1px;height:453px;background:#000;"></div>
<div style="left:900px;top:223px;width:1px;height:453px;background:#000;"></div>
<div style="left:26px;top:244px;width:875px;height:1px;background:#000;"></div>
<div style="left:26px;top:265px;width:875px;height:1px;background:#000;"></div>
<div style="left:26px;top:286px;width:875px;height:1px;background:#000;"></div>
<div style="left:26px;top:307px;width:875px;height:1px;background:#000;"></div>
<div style="left:26px;top:328px;width:875px;height:1px;background:#000;"></div>
<div style="left:26px;top:349px;width:875px;height:1px;background:#000;"></div>
<div style="left:26px;top:370px;width:875px;height:1px;background:#000;"></div>
<div style="left:26px;top:391px;width:875px;height:1px;background:#000;"></div>
<div style="left:26px;top:412px;width:875px;height:1px;background:#000;"></div>
<div style="left:26px;top:433px;width:875px;height:1px;background:#000;"></div>
<div style="left:26px;top:454px;width:875px;height:1px;background:#000;"></div>
<div style="left:26px;top:475px;width:875px;height:1px;background:#000;"></div>
<div style="left:26px;top:496px;width:875px;height:1px;background:#000;"></div>
<div style="left:26px;top:517px;width:875px;height:1px;background:#000;"></div>
<div style="left:26px;top:538px;width:875px;height:1px;background:#000;"></div>
<div style="left:26px;top:559px;width:875px;height:1px;background:#000;"></div>
<div style="left:26px;top:580px;width:875px;height:1px;background:#000;"></div>
<div style="left:26px;top:601px;width:875px;height:1px;background:#000;"></div>
<div style="left:26px;top:622px;width:875px;height:1px;background:#000;"></div>
<div style="left:26px;top:643px;width:875px;height:1px;background:#000;"></div>
<div style="left:26px;top:664px;width:875px;height:1px;background:#000;"></div>
<div style="left:1px;top:223px;width:1085px;height:1px;background:#ababab;"></div>
<div style="left:26px;top:203px;width:1px;height:473px;background:#ababab;"></div>
<div style="left:125px;top:203px;width:1px;height:20px;background:linear-gradient(#e6e6e6,#9f9f9f);"></div>
<div style="left:413px;top:203px;width:1px;height:20px;background:linear-gradient(#e6e6e6,#9f9f9f);"></div>
<div style="left:513px;top:203px;width:1px;height:20px;background:linear-gradient(#e6e6e6,#9f9f9f);"></div>
<div style="left:611px;top:203px;width:1px;height:20px;background:linear-gradient(#e6e6e6,#9f9f9f);"></div>
<div style="left:719px;top:203px;width:1px;height:20px;background:linear-gradient(#e6e6e6,#9f9f9f);"></div>
<div style="left:820px;top:203px;width:1px;height:20px;background:linear-gradient(#e6e6e6,#9f9f9f);"></div>
<div style="left:900px;top:203px;width:1px;height:20px;background:linear-gradient(#e6e6e6,#9f9f9f);"></div>
<div style="left:972px;top:203px;width:1px;height:20px;background:linear-gradient(#e6e6e6,#9f9f9f);"></div>
<div style="left:1044px;top:203px;width:1px;height:20px;background:linear-gradient(#e6e6e6,#9f9f9f);"></div>
<div style="left:1px;top:244px;width:25px;height:1px;background:#b8b8b8;"></div>
<div style="left:1px;top:265px;width:25px;height:1px;background:#b8b8b8;"></div>
<div style="left:1px;top:286px;width:25px;height:1px;background:#b8b8b8;"></div>
<div style="left:1px;top:307px;width:25px;height:1px;background:#b8b8b8;"></div>
<div style="left:1px;top:328px;width:25px;height:1px;background:#b8b8b8;"></div>
<div style="left:1px;top:349px;width:25px;height:1px;background:#b8b8b8;"></div>
<div style="left:1px;top:370px;width:25px;height:1px;background:#b8b8b8;"></div>
<div style="left:1px;top:391px;width:25px;height:1px;background:#b8b8b8;"></div>
<div style="left:1px;top:412px;width:25px;height:1px;background:#b8b8b8;"></div>
<div style="left:1px;top:433px;width:25px;height:1px;background:#b8b8b8;"></div>
<div style="left:1px;top:454px;width:25px;height:1px;background:#b8b8b8;"></div>
<div style="left:1px;top:475px;width:25px;height:1px;background:#b8b8b8;"></div>
<div style="left:1px;top:496px;width:25px;height:1px;background:#b8b8b8;"></div>
<div style="left:1px;top:517px;width:25px;height:1px;background:#b8b8b8;"></div>
<div style="left:1px;top:538px;width:25px;height:1px;background:#b8b8b8;"></div>
<div style="left:1px;top:559px;width:25px;height:1px;background:#b8b8b8;"></div>
<div style="left:1px;top:580px;width:25px;height:1px;background:#b8b8b8;"></div>
<div style="left:1px;top:601px;width:25px;height:1px;background:#b8b8b8;"></div>
<div style="left:1px;top:622px;width:25px;height:1px;background:#b8b8b8;"></div>
<div style="left:1px;top:643px;width:25px;height:1px;background:#b8b8b8;"></div>
<div style="left:1px;top:664px;width:25px;height:1px;background:#b8b8b8;"></div>
<div style="left:27px;top:203px;width:98px;height:20px;background:#d2d2d2;"></div>
<div style="left:26px;top:222px;width:100px;height:2px;background:#217346;"></div>
<div style="left:1px;top:244px;width:25px;height:21px;background:#d2d2d2;"></div>
<svg style="left:1px;top:203px;" width="25" height="20" viewBox="0 0 25 20"><polygon points="22,4 22,17 9,17" fill="#b8b8b8"/></svg>
<div style="left:-224.0px;width:600px;text-align:center;top:205.48px;height:19px;line-height:19px;font-size:14.5px;color:#217346;font-weight:400;white-space:nowrap;font-family:'Liberation Sans', sans-serif;">A</div>
<div style="left:-30.5px;width:600px;text-align:center;top:205.48px;height:19px;line-height:19px;font-size:14.5px;color:#262626;font-weight:400;white-space:nowrap;font-family:'Liberation Sans', sans-serif;">B</div>
<div style="left:163.5px;width:600px;text-align:center;top:205.48px;height:19px;line-height:19px;font-size:14.5px;color:#262626;font-weight:400;white-space:nowrap;font-family:'Liberation Sans', sans-serif;">C</div>
<div style="left:262.5px;width:600px;text-align:center;top:205.48px;height:19px;line-height:19px;font-size:14.5px;color:#262626;font-weight:400;white-space:nowrap;font-family:'Liberation Sans', sans-serif;">D</div>
<div style="left:365.5px;width:600px;text-align:center;top:205.48px;height:19px;line-height:19px;font-size:14.5px;color:#262626;font-weight:400;white-space:nowrap;font-family:'Liberation Sans', sans-serif;">E</div>
<div style="left:470.0px;width:600px;text-align:center;top:205.48px;height:19px;line-height:19px;font-size:14.5px;color:#262626;font-weight:400;white-space:nowrap;font-family:'Liberation Sans', sans-serif;">F</div>
<div style="left:560.5px;width:600px;text-align:center;top:205.48px;height:19px;line-height:19px;font-size:14.5px;color:#262626;font-weight:400;white-space:nowrap;font-family:'Liberation Sans', sans-serif;">G</div>
<div style="left:636.5px;width:600px;text-align:center;top:205.48px;height:19px;line-height:19px;font-size:14.5px;color:#262626;font-weight:400;white-space:nowrap;font-family:'Liberation Sans', sans-serif;">H</div>
<div style="left:708.5px;width:600px;text-align:center;top:205.48px;height:19px;line-height:19px;font-size:14.5px;color:#262626;font-weight:400;white-space:nowrap;font-family:'Liberation Sans', sans-serif;">I</div>
<div style="left:765.5px;width:600px;text-align:center;top:205.48px;height:19px;line-height:19px;font-size:14.5px;color:#262626;font-weight:400;white-space:nowrap;font-family:'Liberation Sans', sans-serif;">J</div>
<div style="left:-287.5px;width:600px;text-align:center;top:225.98px;height:19px;line-height:19px;font-size:14.5px;color:#262626;font-weight:400;white-space:nowrap;font-family:'Liberation Sans', sans-serif;">1</div>
<div style="left:-287.5px;width:600px;text-align:center;top:246.98px;height:19px;line-height:19px;font-size:14.5px;color:#217346;font-weight:400;white-space:nowrap;font-family:'Liberation Sans', sans-serif;">2</div>
<div style="left:-287.5px;width:600px;text-align:center;top:267.98px;height:19px;line-height:19px;font-size:14.5px;color:#262626;font-weight:400;white-space:nowrap;font-family:'Liberation Sans', sans-serif;">3</div>
<div style="left:-287.5px;width:600px;text-align:center;top:288.98px;height:19px;line-height:19px;font-size:14.5px;color:#262626;font-weight:400;white-space:nowrap;font-family:'Liberation Sans', sans-serif;">4</div>
<div style="left:-287.5px;width:600px;text-align:center;top:309.98px;height:19px;line-height:19px;font-size:14.5px;color:#262626;font-weight:400;white-space:nowrap;font-family:'Liberation Sans', sans-serif;">5</div>
<div style="left:-287.5px;width:600px;text-align:center;top:330.98px;height:19px;line-height:19px;font-size:14.5px;color:#262626;font-weight:400;white-space:nowrap;font-family:'Liberation Sans', sans-serif;">6</div>
<div style="left:-287.5px;width:600px;text-align:center;top:351.98px;height:19px;line-height:19px;font-size:14.5px;color:#262626;font-weight:400;white-space:nowrap;font-family:'Liberation Sans', sans-serif;">7</div>
<div style="left:-287.5px;width:600px;text-align:center;top:372.98px;height:19px;line-height:19px;font-size:14.5px;color:#262626;font-weight:400;white-space:nowrap;font-family:'Liberation Sans', sans-serif;">8</div>
<div style="left:-287.5px;width:600px;text-align:center;top:393.98px;height:19px;line-height:19px;font-size:14.5px;color:#262626;font-weight:400;white-space:nowrap;font-family:'Liberation Sans', sans-serif;">9</div>
<div style="left:-287.5px;width:600px;text-align:center;top:414.98px;height:19px;line-height:19px;font-size:14.5px;color:#262626;font-weight:400;white-space:nowrap;font-family:'Liberation Sans', sans-serif;">10</div>
<div style="left:-287.5px;width:600px;text-align:center;top:435.98px;height:19px;line-height:19px;font-size:14.5px;color:#262626;font-weight:400;white-space:nowrap;font-family:'Liberation Sans', sans-serif;">11</div>
<div style="left:-287.5px;width:600px;text-align:center;top:456.98px;height:19px;line-height:19px;font-size:14.5px;color:#262626;font-weight:400;white-space:nowrap;font-family:'Liberation Sans', sans-serif;">12</div>
<div style="left:-287.5px;width:600px;text-align:center;top:477.98px;height:19px;line-height:19px;font-size:14.5px;color:#262626;font-weight:400;white-space:nowrap;font-family:'Liberation Sans', sans-serif;">13</div>
<div style="left:-287.5px;width:600px;text-align:center;top:498.98px;height:19px;line-height:19px;font-size:14.5px;color:#262626;font-weight:400;white-space:nowrap;font-family:'Liberation Sans', sans-serif;">14</div>
<div style="left:-287.5px;width:600px;text-align:center;top:519.98px;height:19px;line-height:19px;font-size:14.5px;color:#262626;font-weight:400;white-space:nowrap;font-family:'Liberation Sans', sans-serif;">15</div>
<div style="left:-287.5px;width:600px;text-align:center;top:540.98px;height:19px;line-height:19px;font-size:14.5px;color:#262626;font-weight:400;white-space:nowrap;font-family:'Liberation Sans', sans-serif;">16</div>
<div style="left:-287.5px;width:600px;text-align:center;top:561.98px;height:19px;line-height:19px;font-size:14.5px;color:#262626;font-weight:400;white-space:nowrap;font-family:'Liberation Sans', sans-serif;">17</div>
<div style="left:-287.5px;width:600px;text-align:center;top:582.98px;height:19px;line-height:19px;font-size:14.5px;color:#262626;font-weight:400;white-space:nowrap;font-family:'Liberation Sans', sans-serif;">18</div>
<div style="left:-287.5px;width:600px;text-align:center;top:603.98px;height:19px;line-height:19px;font-size:14.5px;color:#262626;font-weight:400;white-space:nowrap;font-family:'Liberation Sans', sans-serif;">19</div>
<div style="left:-287.5px;width:600px;text-align:center;top:624.98px;height:19px;line-height:19px;font-size:14.5px;color:#262626;font-weight:400;white-space:nowrap;font-family:'Liberation Sans', sans-serif;">20</div>
<div style="left:-287.5px;width:600px;text-align:center;top:645.98px;height:19px;line-height:19px;font-size:14.5px;color:#262626;font-weight:400;white-space:nowrap;font-family:'Liberation Sans', sans-serif;">21</div>
<div style="left:-287.5px;width:600px;text-align:center;top:666.98px;height:19px;line-height:19px;font-size:14.5px;color:#262626;font-weight:400;white-space:nowrap;font-family:'Liberation Sans', sans-serif;">22</div>
<div style="left:1px;top:224px;width:1085px;height:452px;overflow:hidden">
<div style="left:-225.5px;width:600px;text-align:center;top:1.78px;height:18px;line-height:18px;font-size:14.2px;color:#000;font-weight:700;white-space:nowrap;font-family:'Liberation Sans', sans-serif;">№</div>
<div style="left:162px;width:600px;text-align:center;top:1.78px;height:18px;line-height:18px;font-size:14.2px;color:#000;font-weight:700;white-space:nowrap;font-family:'Liberation Sans', sans-serif;">Пол</div>
<div style="left:261px;width:600px;text-align:center;top:1.78px;height:18px;line-height:18px;font-size:14.2px;color:#000;font-weight:700;white-space:nowrap;font-family:'Liberation Sans', sans-serif;">Вид спорта</div>
<div style="left:364px;width:600px;text-align:center;top:1.78px;height:18px;line-height:18px;font-size:14.2px;color:#000;font-weight:700;white-space:nowrap;font-family:'Liberation Sans', sans-serif;">Продано, шт.</div>
<div style="left:469px;width:600px;text-align:center;top:1.78px;height:18px;line-height:18px;font-size:14.2px;color:#000;font-weight:700;white-space:nowrap;font-family:'Liberation Sans', sans-serif;">Цена, руб.</div>
<div style="left:559.5px;width:600px;text-align:center;top:1.78px;height:18px;line-height:18px;font-size:14.2px;color:#000;font-weight:700;white-space:nowrap;font-family:'Liberation Sans', sans-serif;">Итого</div>
<div style="left:128px;top:1.78px;height:18px;line-height:18px;font-size:14.2px;color:#000;font-weight:700;white-space:nowrap;font-family:'Liberation Sans', sans-serif;">Наименование</div>
<div style="left:128px;top:22.91px;height:19px;line-height:19px;font-size:14.7px;color:#000;font-weight:400;white-space:nowrap;font-family:'Liberation Sans', sans-serif;letter-spacing:0.04px;">Кроссовки беговые, размер 35</div>
<div style="left:163px;width:600px;text-align:center;top:22.91px;height:19px;line-height:19px;font-size:14.7px;color:#000;font-weight:400;white-space:nowrap;font-family:'Liberation Sans', sans-serif;letter-spacing:0.45px;">женский</div>
<div style="left:262px;width:600px;text-align:center;top:22.91px;height:19px;line-height:19px;font-size:14.7px;color:#000;font-weight:400;white-space:nowrap;font-family:'Liberation Sans', sans-serif;letter-spacing:0.45px;">бег</div>
<div style="left:116.5px;width:600px;text-align:right;top:22.78px;height:18px;line-height:18px;font-size:14.2px;color:#000;font-weight:400;white-space:nowrap;font-family:'Liberation Sans', sans-serif;">221</div>
<div style="left:217.5px;width:600px;text-align:right;top:22.78px;height:18px;line-height:18px;font-size:14.2px;color:#000;font-weight:400;white-space:nowrap;font-family:'Liberation Sans', sans-serif;">3 190</div>
<div style="left:296.5px;width:600px;text-align:right;top:22.78px;height:18px;line-height:18px;font-size:14.2px;color:#000;font-weight:400;white-space:nowrap;font-family:'Liberation Sans', sans-serif;">704 990</div>
<div style="left:128px;top:43.91px;height:19px;line-height:19px;font-size:14.7px;color:#000;font-weight:400;white-space:nowrap;font-family:'Liberation Sans', sans-serif;letter-spacing:0.04px;">Кроссовки беговые, размер 39</div>
<div style="left:163px;width:600px;text-align:center;top:43.91px;height:19px;line-height:19px;font-size:14.7px;color:#000;font-weight:400;white-space:nowrap;font-family:'Liberation Sans', sans-serif;letter-spacing:0.45px;">мужской</div>
<div style="left:262px;width:600px;text-align:center;top:43.91px;height:19px;line-height:19px;font-size:14.7px;color:#000;font-weight:400;white-space:nowrap;font-family:'Liberation Sans', sans-serif;letter-spacing:0.45px;">бег</div>
<div style="left:116.5px;width:600px;text-align:right;top:43.78px;height:18px;line-height:18px;font-size:14.2px;color:#000;font-weight:400;white-space:nowrap;font-family:'Liberation Sans', sans-serif;">400</div>
<div style="left:217.5px;width:600px;text-align:right;top:43.78px;height:18px;line-height:18px;font-size:14.2px;color:#000;font-weight:400;white-space:nowrap;font-family:'Liberation Sans', sans-serif;">6 990</div>
<div style="left:296.5px;width:600px;text-align:right;top:43.78px;height:18px;line-height:18px;font-size:14.2px;color:#000;font-weight:400;white-space:nowrap;font-family:'Liberation Sans', sans-serif;">2 796 000</div>
<div style="left:128px;top:64.91px;height:19px;line-height:19px;font-size:14.7px;color:#000;font-weight:400;white-space:nowrap;font-family:'Liberation Sans', sans-serif;letter-spacing:0.04px;">Кроссовки для баскетбола, размер 39</div>
<div style="left:163px;width:600px;text-align:center;top:64.91px;height:19px;line-height:19px;font-size:14.7px;color:#000;font-weight:400;white-space:nowrap;font-family:'Liberation Sans', sans-serif;letter-spacing:0.45px;">женский</div>
<div style="left:262px;width:600px;text-align:center;top:64.91px;height:19px;line-height:19px;font-size:14.7px;color:#000;font-weight:400;white-space:nowrap;font-family:'Liberation Sans', sans-serif;letter-spacing:0.45px;">баскетбол</div>
<div style="left:116.5px;width:600px;text-align:right;top:64.78px;height:18px;line-height:18px;font-size:14.2px;color:#000;font-weight:400;white-space:nowrap;font-family:'Liberation Sans', sans-serif;">98</div>
<div style="left:217.5px;width:600px;text-align:right;top:64.78px;height:18px;line-height:18px;font-size:14.2px;color:#000;font-weight:400;white-space:nowrap;font-family:'Liberation Sans', sans-serif;">5 990</div>
<div style="left:296.5px;width:600px;text-align:right;top:64.78px;height:18px;line-height:18px;font-size:14.2px;color:#000;font-weight:400;white-space:nowrap;font-family:'Liberation Sans', sans-serif;">587 020</div>
<div style="left:128px;top:85.91px;height:19px;line-height:19px;font-size:14.7px;color:#000;font-weight:400;white-space:nowrap;font-family:'Liberation Sans', sans-serif;letter-spacing:0.04px;">Кроссовки для баскетбола, размер 43</div>
<div style="left:163px;width:600px;text-align:center;top:85.91px;height:19px;line-height:19px;font-size:14.7px;color:#000;font-weight:400;white-space:nowrap;font-family:'Liberation Sans', sans-serif;letter-spacing:0.45px;">мужской</div>
<div style="left:262px;width:600px;text-align:center;top:85.91px;height:19px;line-height:19px;font-size:14.7px;color:#000;font-weight:400;white-space:nowrap;font-family:'Liberation Sans', sans-serif;letter-spacing:0.45px;">баскетбол</div>
<div style="left:116.5px;width:600px;text-align:right;top:85.78px;height:18px;line-height:18px;font-size:14.2px;color:#000;font-weight:400;white-space:nowrap;font-family:'Liberation Sans', sans-serif;">334</div>
<div style="left:217.5px;width:600px;text-align:right;top:85.78px;height:18px;line-height:18px;font-size:14.2px;color:#000;font-weight:400;white-space:nowrap;font-family:'Liberation Sans', sans-serif;">5 890</div>
<div style="left:296.5px;width:600px;text-align:right;top:85.78px;height:18px;line-height:18px;font-size:14.2px;color:#000;font-weight:400;white-space:nowrap;font-family:'Liberation Sans', sans-serif;">1 967 260</div>
<div style="left:128px;top:106.91px;height:19px;line-height:19px;font-size:14.7px;color:#000;font-weight:400;white-space:nowrap;font-family:'Liberation Sans', sans-serif;letter-spacing:0.04px;">Кроссовки беговые, размер 40</div>
<div style="left:163px;width:600px;text-align:center;top:106.91px;height:19px;line-height:19px;font-size:14.7px;color:#000;font-weight:400;white-space:nowrap;font-family:'Liberation Sans', sans-serif;letter-spacing:0.45px;">женский</div>
<div style="left:262px;width:600px;text-align:center;top:106.91px;height:19px;line-height:19px;font-size:14.7px;color:#000;font-weight:400;white-space:nowrap;font-family:'Liberation Sans', sans-serif;letter-spacing:0.45px;">бег</div>
<div style="left:116.5px;width:600px;text-align:right;top:106.78px;height:18px;line-height:18px;font-size:14.2px;color:#000;font-weight:400;white-space:nowrap;font-family:'Liberation Sans', sans-serif;">321</div>
<div style="left:217.5px;width:600px;text-align:right;top:106.78px;height:18px;line-height:18px;font-size:14.2px;color:#000;font-weight:400;white-space:nowrap;font-family:'Liberation Sans', sans-serif;">6 490</div>
<div style="left:296.5px;width:600px;text-align:right;top:106.78px;height:18px;line-height:18px;font-size:14.2px;color:#000;font-weight:400;white-space:nowrap;font-family:'Liberation Sans', sans-serif;">2 083 290</div>
<div style="left:128px;top:127.91px;height:19px;line-height:19px;font-size:14.7px;color:#000;font-weight:400;white-space:nowrap;font-family:'Liberation Sans', sans-serif;letter-spacing:0.04px;">Кроссовки беговые, размер 40</div>
<div style="left:163px;width:600px;text-align:center;top:127.91px;height:19px;line-height:19px;font-size:14.7px;color:#000;font-weight:400;white-space:nowrap;font-family:'Liberation Sans', sans-serif;letter-spacing:0.45px;">мужской</div>
<div style="left:262px;width:600px;text-align:center;top:127.91px;height:19px;line-height:19px;font-size:14.7px;color:#000;font-weight:400;white-space:nowrap;font-family:'Liberation Sans', sans-serif;letter-spacing:0.45px;">бег</div>
<div style="left:116.5px;width:600px;text-align:right;top:127.78px;height:18px;line-height:18px;font-size:14.2px;color:#000;font-weight:400;white-space:nowrap;font-family:'Liberation Sans', sans-serif;">500</div>
<div style="left:217.5px;width:600px;text-align:right;top:127.78px;height:18px;line-height:18px;font-size:14.2px;color:#000;font-weight:400;white-space:nowrap;font-family:'Liberation Sans', sans-serif;">6 990</div>
<div style="left:296.5px;width:600px;text-align:right;top:127.78px;height:18px;line-height:18px;font-size:14.2px;color:#000;font-weight:400;white-space:nowrap;font-family:'Liberation Sans', sans-serif;">3 495 000</div>
<div style="left:128px;top:148.91px;height:19px;line-height:19px;font-size:14.7px;color:#000;font-weight:400;white-space:nowrap;font-family:'Liberation Sans', sans-serif;letter-spacing:0.04px;">Кроссовки беговые, размер 41</div>
<div style="left:163px;width:600px;text-align:center;top:148.91px;height:19px;line-height:19px;font-size:14.7px;color:#000;font-weight:400;white-space:nowrap;font-family:'Liberation Sans', sans-serif;letter-spacing:0.45px;">мужской</div>
<div style="left:262px;width:600px;text-align:center;top:148.91px;height:19px;line-height:19px;font-size:14.7px;color:#000;font-weight:400;white-space:nowrap;font-family:'Liberation Sans', sans-serif;letter-spacing:0.45px;">бег</div>
<div style="left:116.5px;width:600px;text-align:right;top:148.78px;height:18px;line-height:18px;font-size:14.2px;color:#000;font-weight:400;white-space:nowrap;font-family:'Liberation Sans', sans-serif;">664</div>
<div style="left:217.5px;width:600px;text-align:right;top:148.78px;height:18px;line-height:18px;font-size:14.2px;color:#000;font-weight:400;white-space:nowrap;font-family:'Liberation Sans', sans-serif;">6 990</div>
<div style="left:296.5px;width:600px;text-align:right;top:148.78px;height:18px;line-height:18px;font-size:14.2px;color:#000;font-weight:400;white-space:nowrap;font-family:'Liberation Sans', sans-serif;">4 641 360</div>
<div style="left:128px;top:169.91px;height:19px;line-height:19px;font-size:14.7px;color:#000;font-weight:400;white-space:nowrap;font-family:'Liberation Sans', sans-serif;letter-spacing:0.04px;">Кроссовки теннисные, размер 41</div>
<div style="left:163px;width:600px;text-align:center;top:169.91px;height:19px;line-height:19px;font-size:14.7px;color:#000;font-weight:400;white-space:nowrap;font-family:'Liberation Sans', sans-serif;letter-spacing:0.45px;">мужской</div>
<div style="left:262px;width:600px;text-align:center;top:169.91px;height:19px;line-height:19px;font-size:14.7px;color:#000;font-weight:400;white-space:nowrap;font-family:'Liberation Sans', sans-serif;letter-spacing:0.45px;">теннис</div>
<div style="left:116.5px;width:600px;text-align:right;top:169.78px;height:18px;line-height:18px;font-size:14.2px;color:#000;font-weight:400;white-space:nowrap;font-family:'Liberation Sans', sans-serif;">553</div>
<div style="left:217.5px;width:600px;text-align:right;top:169.78px;height:18px;line-height:18px;font-size:14.2px;color:#000;font-weight:400;white-space:nowrap;font-family:'Liberation Sans', sans-serif;">7 990</div>
<div style="left:296.5px;width:600px;text-align:right;top:169.78px;height:18px;line-height:18px;font-size:14.2px;color:#000;font-weight:400;white-space:nowrap;font-family:'Liberation Sans', sans-serif;">4 418 470</div>
<div style="left:128px;top:190.91px;height:19px;line-height:19px;font-size:14.7px;color:#000;font-weight:400;white-space:nowrap;font-family:'Liberation Sans', sans-serif;letter-spacing:0.04px;">Кроссовки теннисные, размер 42</div>
<div style="left:163px;width:600px;text-align:center;top:190.91px;height:19px;line-height:19px;font-size:14.7px;color:#000;font-weight:400;white-space:nowrap;font-family:'Liberation Sans', sans-serif;letter-spacing:0.45px;">мужской</div>
<div style="left:262px;width:600px;text-align:center;top:190.91px;height:19px;line-height:19px;font-size:14.7px;color:#000;font-weight:400;white-space:nowrap;font-family:'Liberation Sans', sans-serif;letter-spacing:0.45px;">теннис</div>
<div style="left:116.5px;width:600px;text-align:right;top:190.78px;height:18px;line-height:18px;font-size:14.2px;color:#000;font-weight:400;white-space:nowrap;font-family:'Liberation Sans', sans-serif;">123</div>
<div style="left:217.5px;width:600px;text-align:right;top:190.78px;height:18px;line-height:18px;font-size:14.2px;color:#000;font-weight:400;white-space:nowrap;font-family:'Liberation Sans', sans-serif;">7 990</div>
<div style="left:296.5px;width:600px;text-align:right;top:190.78px;height:18px;line-height:18px;font-size:14.2px;color:#000;font-weight:400;white-space:nowrap;font-family:'Liberation Sans', sans-serif;">982 770</div>
<div style="left:128px;top:211.91px;height:19px;line-height:19px;font-size:14.7px;color:#000;font-weight:400;white-space:nowrap;font-family:'Liberation Sans', sans-serif;letter-spacing:0.04px;">Кроссовки беговые, размер 42</div>
<div style="left:163px;width:600px;text-align:center;top:211.91px;height:19px;line-height:19px;font-size:14.7px;color:#000;font-weight:400;white-space:nowrap;font-family:'Liberation Sans', sans-serif;letter-spacing:0.45px;">мужской</div>
<div style="left:262px;width:600px;text-align:center;top:211.91px;height:19px;line-height:19px;font-size:14.7px;color:#000;font-weight:400;white-space:nowrap;font-family:'Liberation Sans', sans-serif;letter-spacing:0.45px;">бег</div>
<div style="left:116.5px;width:600px;text-align:right;top:211.78px;height:18px;line-height:18px;font-size:14.2px;color:#000;font-weight:400;white-space:nowrap;font-family:'Liberation Sans', sans-serif;">334</div>
<div style="left:217.5px;width:600px;text-align:right;top:211.78px;height:18px;line-height:18px;font-size:14.2px;color:#000;font-weight:400;white-space:nowrap;font-family:'Liberation Sans', sans-serif;">6 990</div>
<div style="left:296.5px;width:600px;text-align:right;top:211.78px;height:18px;line-height:18px;font-size:14.2px;color:#000;font-weight:400;white-space:nowrap;font-family:'Liberation Sans', sans-serif;">2 334 660</div>
<div style="left:128px;top:232.91px;height:19px;line-height:19px;font-size:14.7px;color:#000;font-weight:400;white-space:nowrap;font-family:'Liberation Sans', sans-serif;letter-spacing:0.04px;">Кроссовки беговые, размер 44</div>
<div style="left:163px;width:600px;text-align:center;top:232.91px;height:19px;line-height:19px;font-size:14.7px;color:#000;font-weight:400;white-space:nowrap;font-family:'Liberation Sans', sans-serif;letter-spacing:0.45px;">мужской</div>
<div style="left:262px;width:600px;text-align:center;top:232.91px;height:19px;line-height:19px;font-size:14.7px;color:#000;font-weight:400;white-space:nowrap;font-family:'Liberation Sans', sans-serif;letter-spacing:0.45px;">бег</div>
<div style="left:116.5px;width:600px;text-align:right;top:232.78px;height:18px;line-height:18px;font-size:14.2px;color:#000;font-weight:400;white-space:nowrap;font-family:'Liberation Sans', sans-serif;">222</div>
<div style="left:217.5px;width:600px;text-align:right;top:232.78px;height:18px;line-height:18px;font-size:14.2px;color:#000;font-weight:400;white-space:nowrap;font-family:'Liberation Sans', sans-serif;">6 990</div>
<div style="left:296.5px;width:600px;text-align:right;top:232.78px;height:18px;line-height:18px;font-size:14.2px;color:#000;font-weight:400;white-space:nowrap;font-family:'Liberation Sans', sans-serif;">1 551 780</div>
<div style="left:128px;top:253.91px;height:19px;line-height:19px;font-size:14.7px;color:#000;font-weight:400;white-space:nowrap;font-family:'Liberation Sans', sans-serif;letter-spacing:0.04px;">Кроссовки беговые, размер 45</div>
<div style="left:163px;width:600px;text-align:center;top:253.91px;height:19px;line-height:19px;font-size:14.7px;color:#000;font-weight:400;white-space:nowrap;font-family:'Liberation Sans', sans-serif;letter-spacing:0.45px;">мужской</div>
<div style="left:262px;width:600px;text-align:center;top:253.91px;height:19px;line-height:19px;font-size:14.7px;color:#000;font-weight:400;white-space:nowrap;font-family:'Liberation Sans', sans-serif;letter-spacing:0.45px;">бег</div>
<div style="left:116.5px;width:600px;text-align:right;top:253.78px;height:18px;line-height:18px;font-size:14.2px;color:#000;font-weight:400;white-space:nowrap;font-family:'Liberation Sans', sans-serif;">221</div>
<div style="left:217.5px;width:600px;text-align:right;top:253.78px;height:18px;line-height:18px;font-size:14.2px;color:#000;font-weight:400;white-space:nowrap;font-family:'Liberation Sans', sans-serif;">6 990</div>
<div style="left:296.5px;width:600px;text-align:right;top:253.78px;height:18px;line-height:18px;font-size:14.2px;color:#000;font-weight:400;white-space:nowrap;font-family:'Liberation Sans', sans-serif;">1 544 790</div>
<div style="left:128px;top:274.91px;height:19px;line-height:19px;font-size:14.7px;color:#000;font-weight:400;white-space:nowrap;font-family:'Liberation Sans', sans-serif;letter-spacing:0.04px;">Кроссовки теннисные, размер 38</div>
<div style="left:163px;width:600px;text-align:center;top:274.91px;height:19px;line-height:19px;font-size:14.7px;color:#000;font-weight:400;white-space:nowrap;font-family:'Liberation Sans', sans-serif;letter-spacing:0.45px;">женский</div>
<div style="left:262px;width:600px;text-align:center;top:274.91px;height:19px;line-height:19px;font-size:14.7px;color:#000;font-weight:400;white-space:nowrap;font-family:'Liberation Sans', sans-serif;letter-spacing:0.45px;">теннис</div>
<div style="left:116.5px;width:600px;text-align:right;top:274.78px;height:18px;line-height:18px;font-size:14.2px;color:#000;font-weight:400;white-space:nowrap;font-family:'Liberation Sans', sans-serif;">443</div>
<div style="left:217.5px;width:600px;text-align:right;top:274.78px;height:18px;line-height:18px;font-size:14.2px;color:#000;font-weight:400;white-space:nowrap;font-family:'Liberation Sans', sans-serif;">7 990</div>
<div style="left:296.5px;width:600px;text-align:right;top:274.78px;height:18px;line-height:18px;font-size:14.2px;color:#000;font-weight:400;white-space:nowrap;font-family:'Liberation Sans', sans-serif;">3 539 570</div>
<div style="left:128px;top:295.91px;height:19px;line-height:19px;font-size:14.7px;color:#000;font-weight:400;white-space:nowrap;font-family:'Liberation Sans', sans-serif;letter-spacing:0.04px;">Кроссовки беговые, размер 35</div>
<div style="left:163px;width:600px;text-align:center;top:295.91px;height:19px;line-height:19px;font-size:14.7px;color:#000;font-weight:400;white-space:nowrap;font-family:'Liberation Sans', sans-serif;letter-spacing:0.45px;">женский</div>
<div style="left:262px;width:600px;text-align:center;top:295.91px;height:19px;line-height:19px;font-size:14.7px;color:#000;font-weight:400;white-space:nowrap;font-family:'Liberation Sans', sans-serif;letter-spacing:0.45px;">бег</div>
<div style="left:116.5px;width:600px;text-align:right;top:295.78px;height:18px;line-height:18px;font-size:14.2px;color:#000;font-weight:400;white-space:nowrap;font-family:'Liberation Sans', sans-serif;">241</div>
<div style="left:217.5px;width:600px;text-align:right;top:295.78px;height:18px;line-height:18px;font-size:14.2px;color:#000;font-weight:400;white-space:nowrap;font-family:'Liberation Sans', sans-serif;">6 490</div>
<div style="left:296.5px;width:600px;text-align:right;top:295.78px;height:18px;line-height:18px;font-size:14.2px;color:#000;font-weight:400;white-space:nowrap;font-family:'Liberation Sans', sans-serif;">1 564 090</div>
<div style="left:128px;top:316.91px;height:19px;line-height:19px;font-size:14.7px;color:#000;font-weight:400;white-space:nowrap;font-family:'Liberation Sans', sans-serif;letter-spacing:0.04px;">Кроссовки теннисные, размер 43</div>
<div style="left:163px;width:600px;text-align:center;top:316.91px;height:19px;line-height:19px;font-size:14.7px;color:#000;font-weight:400;white-space:nowrap;font-family:'Liberation Sans', sans-serif;letter-spacing:0.45px;">мужской</div>
<div style="left:262px;width:600px;text-align:center;top:316.91px;height:19px;line-height:19px;font-size:14.7px;color:#000;font-weight:400;white-space:nowrap;font-family:'Liberation Sans', sans-serif;letter-spacing:0.45px;">теннис</div>
<div style="left:116.5px;width:600px;text-align:right;top:316.78px;height:18px;line-height:18px;font-size:14.2px;color:#000;font-weight:400;white-space:nowrap;font-family:'Liberation Sans', sans-serif;">543</div>
<div style="left:217.5px;width:600px;text-align:right;top:316.78px;height:18px;line-height:18px;font-size:14.2px;color:#000;font-weight:400;white-space:nowrap;font-family:'Liberation Sans', sans-serif;">7 990</div>
<div style="left:296.5px;width:600px;text-align:right;top:316.78px;height:18px;line-height:18px;font-size:14.2px;color:#000;font-weight:400;white-space:nowrap;font-family:'Liberation Sans', sans-serif;">4 338 570</div>
<div style="left:128px;top:337.91px;height:19px;line-height:19px;font-size:14.7px;color:#000;font-weight:400;white-space:nowrap;font-family:'Liberation Sans', sans-serif;letter-spacing:0.04px;">Кроссовки беговые, размер 36</div>
<div style="left:163px;width:600px;text-align:center;top:337.91px;height:19px;line-height:19px;font-size:14.7px;color:#000;font-weight:400;white-space:nowrap;font-family:'Liberation Sans', sans-serif;letter-spacing:0.45px;">женский</div>
<div style="left:262px;width:600px;text-align:center;top:337.91px;height:19px;line-height:19px;font-size:14.7px;color:#000;font-weight:400;white-space:nowrap;font-family:'Liberation Sans', sans-serif;letter-spacing:0.45px;">бег</div>
<div style="left:116.5px;width:600px;text-align:right;top:337.78px;height:18px;line-height:18px;font-size:14.2px;color:#000;font-weight:400;white-space:nowrap;font-family:'Liberation Sans', sans-serif;">332</div>
<div style="left:217.5px;width:600px;text-align:right;top:337.78px;height:18px;line-height:18px;font-size:14.2px;color:#000;font-weight:400;white-space:nowrap;font-family:'Liberation Sans', sans-serif;">6 490</div>
<div style="left:296.5px;width:600px;text-align:right;top:337.78px;height:18px;line-height:18px;font-size:14.2px;color:#000;font-weight:400;white-space:nowrap;font-family:'Liberation Sans', sans-serif;">2 154 680</div>
<div style="left:128px;top:358.91px;height:19px;line-height:19px;font-size:14.7px;color:#000;font-weight:400;white-space:nowrap;font-family:'Liberation Sans', sans-serif;letter-spacing:0.04px;">Кроссовки беговые, размер 37</div>
<div style="left:163px;width:600px;text-align:center;top:358.91px;height:19px;line-height:19px;font-size:14.7px;color:#000;font-weight:400;white-space:nowrap;font-family:'Liberation Sans', sans-serif;letter-spacing:0.45px;">женский</div>
<div style="left:262px;width:600px;text-align:center;top:358.91px;height:19px;line-height:19px;font-size:14.7px;color:#000;font-weight:400;white-space:nowrap;font-family:'Liberation Sans', sans-serif;letter-spacing:0.45px;">бег</div>
<div style="left:116.5px;width:600px;text-align:right;top:358.78px;height:18px;line-height:18px;font-size:14.2px;color:#000;font-weight:400;white-space:nowrap;font-family:'Liberation Sans', sans-serif;">333</div>
<div style="left:217.5px;width:600px;text-align:right;top:358.78px;height:18px;line-height:18px;font-size:14.2px;color:#000;font-weight:400;white-space:nowrap;font-family:'Liberation Sans', sans-serif;">6 490</div>
<div style="left:296.5px;width:600px;text-align:right;top:358.78px;height:18px;line-height:18px;font-size:14.2px;color:#000;font-weight:400;white-space:nowrap;font-family:'Liberation Sans', sans-serif;">2 161 170</div>
<div style="left:128px;top:379.91px;height:19px;line-height:19px;font-size:14.7px;color:#000;font-weight:400;white-space:nowrap;font-family:'Liberation Sans', sans-serif;letter-spacing:0.04px;">Кроссовки беговые, размер 38</div>
<div style="left:163px;width:600px;text-align:center;top:379.91px;height:19px;line-height:19px;font-size:14.7px;color:#000;font-weight:400;white-space:nowrap;font-family:'Liberation Sans', sans-serif;letter-spacing:0.45px;">женский</div>
<div style="left:262px;width:600px;text-align:center;top:379.91px;height:19px;line-height:19px;font-size:14.7px;color:#000;font-weight:400;white-space:nowrap;font-family:'Liberation Sans', sans-serif;letter-spacing:0.45px;">бег</div>
<div style="left:116.5px;width:600px;text-align:right;top:379.78px;height:18px;line-height:18px;font-size:14.2px;color:#000;font-weight:400;white-space:nowrap;font-family:'Liberation Sans', sans-serif;">421</div>
<div style="left:217.5px;width:600px;text-align:right;top:379.78px;height:18px;line-height:18px;font-size:14.2px;color:#000;font-weight:400;white-space:nowrap;font-family:'Liberation Sans', sans-serif;">6 490</div>
<div style="left:296.5px;width:600px;text-align:right;top:379.78px;height:18px;line-height:18px;font-size:14.2px;color:#000;font-weight:400;white-space:nowrap;font-family:'Liberation Sans', sans-serif;">2 732 290</div>
<div style="left:128px;top:400.91px;height:19px;line-height:19px;font-size:14.7px;color:#000;font-weight:400;white-space:nowrap;font-family:'Liberation Sans', sans-serif;letter-spacing:0.04px;">Кроссовки беговые, размер 38</div>
<div style="left:163px;width:600px;text-align:center;top:400.91px;height:19px;line-height:19px;font-size:14.7px;color:#000;font-weight:400;white-space:nowrap;font-family:'Liberation Sans', sans-serif;letter-spacing:0.45px;">мужской</div>
<div style="left:262px;width:600px;text-align:center;top:400.91px;height:19px;line-height:19px;font-size:14.7px;color:#000;font-weight:400;white-space:nowrap;font-family:'Liberation Sans', sans-serif;letter-spacing:0.45px;">бег</div>
<div style="left:116.5px;width:600px;text-align:right;top:400.78px;height:18px;line-height:18px;font-size:14.2px;color:#000;font-weight:400;white-space:nowrap;font-family:'Liberation Sans', sans-serif;">220</div>
<div style="left:217.5px;width:600px;text-align:right;top:400.78px;height:18px;line-height:18px;font-size:14.2px;color:#000;font-weight:400;white-space:nowrap;font-family:'Liberation Sans', sans-serif;">6 990</div>
<div style="left:296.5px;width:600px;text-align:right;top:400.78px;height:18px;line-height:18px;font-size:14.2px;color:#000;font-weight:400;white-space:nowrap;font-family:'Liberation Sans', sans-serif;">1 537 800</div>
<div style="left:128px;top:421.91px;height:19px;line-height:19px;font-size:14.7px;color:#000;font-weight:400;white-space:nowrap;font-family:'Liberation Sans', sans-serif;letter-spacing:0.04px;">Кроссовки теннисные, размер 39</div>
<div style="left:163px;width:600px;text-align:center;top:421.91px;height:19px;line-height:19px;font-size:14.7px;color:#000;font-weight:400;white-space:nowrap;font-family:'Liberation Sans', sans-serif;letter-spacing:0.45px;">женский</div>
<div style="left:262px;width:600px;text-align:center;top:421.91px;height:19px;line-height:19px;font-size:14.7px;color:#000;font-weight:400;white-space:nowrap;font-family:'Liberation Sans', sans-serif;letter-spacing:0.45px;">теннис</div>
<div style="left:116.5px;width:600px;text-align:right;top:421.78px;height:18px;line-height:18px;font-size:14.2px;color:#000;font-weight:400;white-space:nowrap;font-family:'Liberation Sans', sans-serif;">554</div>
<div style="left:217.5px;width:600px;text-align:right;top:421.78px;height:18px;line-height:18px;font-size:14.2px;color:#000;font-weight:400;white-space:nowrap;font-family:'Liberation Sans', sans-serif;">7 990</div>
<div style="left:296.5px;width:600px;text-align:right;top:421.78px;height:18px;line-height:18px;font-size:14.2px;color:#000;font-weight:400;white-space:nowrap;font-family:'Liberation Sans', sans-serif;">4 426 460</div>
<div style="left:128px;top:442.91px;height:19px;line-height:19px;font-size:14.7px;color:#000;font-weight:400;white-space:nowrap;font-family:'Liberation Sans', sans-serif;letter-spacing:0.04px;">Кроссовки беговые, размер 35</div>
<div style="left:163px;width:600px;text-align:center;top:442.91px;height:19px;line-height:19px;font-size:14.7px;color:#000;font-weight:400;white-space:nowrap;font-family:'Liberation Sans', sans-serif;letter-spacing:0.45px;">женский</div>
<div style="left:262px;width:600px;text-align:center;top:442.91px;height:19px;line-height:19px;font-size:14.7px;color:#000;font-weight:400;white-space:nowrap;font-family:'Liberation Sans', sans-serif;letter-spacing:0.45px;">бег</div>
<div style="left:116.5px;width:600px;text-align:right;top:442.78px;height:18px;line-height:18px;font-size:14.2px;color:#000;font-weight:400;white-space:nowrap;font-family:'Liberation Sans', sans-serif;">125</div>
<div style="left:217.5px;width:600px;text-align:right;top:442.78px;height:18px;line-height:18px;font-size:14.2px;color:#000;font-weight:400;white-space:nowrap;font-family:'Liberation Sans', sans-serif;">3 990</div>
<div style="left:296.5px;width:600px;text-align:right;top:442.78px;height:18px;line-height:18px;font-size:14.2px;color:#000;font-weight:400;white-space:nowrap;font-family:'Liberation Sans', sans-serif;">498 750</div>
<div style="left:28.5px;top:22.91px;height:19px;line-height:19px;font-size:14.7px;color:#000;font-weight:400;white-space:nowrap;font-family:'Liberation Sans', sans-serif;">1</div>
</div>
<div style="left:25px;top:243px;width:102px;height:24px;box-sizing:border-box;border:2px solid #217346;background:transparent;"></div>
<div style="left:27px;top:245px;width:98px;height:20px;box-sizing:border-box;border:1px solid #fff;background:transparent;"></div>
<div style="left:123px;top:263px;width:6px;height:6px;background:#217346;border:1px solid #fff;box-sizing:border-box"></div>
<div style="left:19px;top:239px;width:115px;height:33px;box-sizing:border-box;border:3px solid #ff0000;background:transparent;border-radius:9px"></div>
<div style="left:1086px;top:203px;width:22px;height:473px;background:#e6e6e6;"></div>
<div style="left:1086px;top:203px;width:1px;height:473px;background:#9b9b9b;"></div>
<div style="left:1090px;top:203px;width:15px;height:459px;background:#dadada;"></div>
<div style="left:1090px;top:220px;width:15px;height:273px;box-sizing:border-box;border:1px solid #ababab;background:#fff;"></div>
<div style="left:1090px;top:662px;width:15px;height:14px;box-sizing:border-box;border:1px solid #c6c6c6;background:#fff;"></div>
<svg style="left:1090px;top:662px;" width="15" height="14" viewBox="0 0 15 14"><polygon points="4,5 11,5 7.5,9" fill="#777"/></svg>
<div style="left:1px;top:676px;width:1085px;height:1px;background:#9b9b9b;"></div>
<div style="left:1086px;top:676px;width:22px;height:1px;background:#e6e6e6;"></div>
<div style="left:1px;top:677px;width:1107px;height:27px;background:#e6e6e6;"></div>
<div style="left:1px;top:704px;width:1107px;height:1px;background:#d5d5d5;"></div>
<div style="left:98px;top:676px;width:108px;height:25px;box-sizing:border-box;border:1px solid #ababab;background:#fff;border-top:0;border-bottom:2px solid #217346"></div>
<div style="left:-148.5px;width:600px;text-align:center;top:681.00px;height:17px;line-height:17px;font-size:13px;color:#217346;font-weight:700;white-space:nowrap;font-family:'Liberation Sans', sans-serif;">microexcel.ru</div>
<svg style="left:20px;top:680px;" width="50" height="18" viewBox="0 0 50 18"><polygon points="10,5 10,13 6,9" fill="#c6c6c6"/><polygon points="35,5 35,13 39,9" fill="#c6c6c6"/></svg>
<svg style="left:237px;top:681px;" width="18" height="18" viewBox="0 0 18 18"><circle cx="9" cy="9" r="7.5" fill="none" stroke="#777" stroke-width="1.3"/><path d="M9 4.5v9M4.5 9h9" stroke="#777" stroke-width="1.6"/></svg>
<svg style="left:662px;top:684px;" width="6" height="13" viewBox="0 0 6 13"><rect x="1" y="1" width="2" height="2" fill="#a0a0a0"/><rect x="1" y="5" width="2" height="2" fill="#a0a0a0"/><rect x="1" y="9" width="2" height="2" fill="#a0a0a0"/></svg>
<div style="left:681px;top:683px;width:16px;height:15px;box-sizing:border-box;border:1px solid #ababab;background:#fff;"></div>
<svg style="left:681px;top:683px;" width="16" height="15" viewBox="0 0 16 15"><polygon points="10,4 10,11 6,7.5" fill="#777"/></svg>
<div style="left:696px;top:683px;width:335px;height:15px;box-sizing:border-box;border:1px solid #ababab;background:#fff;"></div>
<div style="left:1031px;top:683px;width:43px;height:15px;background:#dadada;"></div>
<div style="left:1074px;top:683px;width:15px;height:15px;box-sizing:border-box;border:1px solid #c6c6c6;background:#fff;"></div>
<svg style="left:1074px;top:683px;" width="15" height="15" viewBox="0 0 15 15"><polygon points="5,4 5,11 9,7.5" fill="#777"/></svg>
<div style="left:1px;top:705px;width:1107px;height:19px;background:#f3f3f3;"></div>
<div style="left:6px;top:706.84px;height:16px;line-height:16px;font-size:12px;color:#262626;font-weight:400;white-space:nowrap;font-family:'Liberation Sans', sans-serif;">Готово</div>
<div style="left:808px;top:705px;width:38px;height:19px;background:#c8c8c8;"></div>
<svg style="left:819px;top:707px;" width="15" height="15" viewBox="0 0 15 15"><path d="M1.5 1v13M5.5 1v13M9.5 1v13M13.5 1v13M1 1.5h13M1 5.5h13M1 9.5h13M1 13.5h13" stroke="#6d6d6d" stroke-width="1.6"/></svg>
<svg style="left:857px;top:707px;" width="16" height="15" viewBox="0 0 16 15"><rect x="1" y="1" width="14" height="13" fill="none" stroke="#6d6d6d" stroke-width="1.4"/><rect x="4" y="3.5" width="8" height="8" fill="none" stroke="#6d6d6d" stroke-width="1.2"/><path d="M5.5 6h5M5.5 8h5M5.5 10h5" stroke="#6d6d6d" stroke-width="1"/></svg>
<svg style="left:895px;top:707px;" width="16" height="15" viewBox="0 0 16 15"><path d="M1 1h14v13H1zM5 1v7h4V1M1 8h8" fill="none" stroke="#6d6d6d" stroke-width="1.4"/></svg>
<div style="left:1059.5px;top:706.34px;height:16px;line-height:16px;font-size:12px;color:#262626;font-weight:400;white-space:nowrap;font-family:'Liberation Sans', sans-serif;">100 %</div>
<div style="left:937px;top:715px;width:100px;height:1px;background:#a6a6a6;"></div>
<div style="left:985px;top:709px;width:5px;height:11px;background:#6d6d6d;"></div>
<div style="left:927px;top:714px;width:6px;height:2px;background:#555;"></div>
<svg style="left:1040px;top:710px;" width="9" height="10" viewBox="0 0 9 10"><path d="M0.5 5h7.5M4.25 1v8" stroke="#555" stroke-width="1.8"/></svg>
<svg style="left:62px;top:707px;" width="15" height="15" viewBox="0 0 15 15"><circle cx="3.5" cy="3.5" r="3" fill="#555"/><rect x="3" y="5" width="11" height="9.5" fill="#fff" stroke="#555" stroke-width="1"/><path d="M5 8h1.5M8 8h1.5M11 8h1.5M5 10.5h1.5M8 10.5h1.5M11 10.5h1.5M5 13h1.5M8 13h1.5M11 13h1.5" stroke="#555" stroke-width="1.3"/></svg>
<div style="left:911px;top:113px;width:196px;height:196px;box-sizing:border-box;border:1px solid #c6c6c6;background:#fff;box-shadow:-2px 2px 4px rgba(0,0,0,0.12)"></div>
<div style="left:914px;top:235px;width:191px;height:24px;background:#c6c6c6;"></div>
<div style="left:945.5px;top:118.84px;height:16px;line-height:16px;font-size:12px;color:#262626;font-weight:400;white-space:nowrap;font-family:'Liberation Sans', sans-serif;">В<u>н</u>из</div>
<div style="left:945.5px;top:142.84px;height:16px;line-height:16px;font-size:12px;color:#a6a6a6;font-weight:400;white-space:nowrap;font-family:'Liberation Sans', sans-serif;">Вправ<u>о</u></div>
<div style="left:945.5px;top:166.84px;height:16px;line-height:16px;font-size:12px;color:#262626;font-weight:400;white-space:nowrap;font-family:'Liberation Sans', sans-serif;"><u>В</u>верх</div>
<div style="left:945.5px;top:190.84px;height:16px;line-height:16px;font-size:12px;color:#262626;font-weight:400;white-space:nowrap;font-family:'Liberation Sans', sans-serif;">В<u>л</u>ево</div>
<div style="left:945.5px;top:214.84px;height:16px;line-height:16px;font-size:12px;color:#a6a6a6;font-weight:400;white-space:nowrap;font-family:'Liberation Sans', sans-serif;">По лис<u>т</u>ам...</div>
<div style="left:945.5px;top:238.84px;height:16px;line-height:16px;font-size:12px;color:#262626;font-weight:400;white-space:nowrap;font-family:'Liberation Sans', sans-serif;">Прог<u>р</u>ессия...</div>
<div style="left:945.5px;top:262.84px;height:16px;line-height:16px;font-size:12px;color:#262626;font-weight:400;white-space:nowrap;font-family:'Liberation Sans', sans-serif;">В<u>ы</u>ровнять</div>
<div style="left:945.5px;top:286.84px;height:16px;line-height:16px;font-size:12px;color:#262626;font-weight:400;white-space:nowrap;font-family:'Liberation Sans', sans-serif;"><u>М</u>гновенное заполнение</div>
<svg style="left:917px;top:118px;" width="16" height="18" viewBox="0 0 16 18"><rect x="1.5" y="1.5" width="13" height="15" fill="#fff" stroke="#6d6d6d" stroke-width="1"/><rect x="1" y="1" width="14" height="3.2" fill="#6d6d6d"/><path d="M8 6v7.5M4.2 10L8 13.8l3.8-3.8" fill="none" stroke="#1e7bc6" stroke-width="2.5"/></svg>
<svg style="left:917px;top:143px;" width="17" height="16" viewBox="0 0 17 16"><rect x="1.5" y="1.5" width="14" height="13" fill="#fbf7fb" stroke="#b9b9b9" stroke-width="1"/><rect x="1" y="1" width="3.2" height="14" fill="#b0b0b0"/><path d="M5.5 8h8M10 4.2L13.8 8 10 11.8" fill="none" stroke="#b0b0b0" stroke-width="2.5"/></svg>
<svg style="left:917px;top:166px;" width="16" height="18" viewBox="0 0 16 18"><rect x="1.5" y="1.5" width="13" height="15" fill="#fff" stroke="#6d6d6d" stroke-width="1"/><rect x="1" y="13.8" width="14" height="3.2" fill="#6d6d6d"/><path d="M8 12.5V4.5M4.2 8.2L8 4.4l3.8 3.8" fill="none" stroke="#1e7bc6" stroke-width="2.5"/></svg>
<svg style="left:917px;top:191px;" width="17" height="16" viewBox="0 0 17 16"><rect x="1.5" y="1.5" width="14" height="13" fill="#fff" stroke="#6d6d6d" stroke-width="1"/><rect x="12.8" y="1" width="3.2" height="14" fill="#6d6d6d"/><path d="M11.5 8H3.5M7.2 4.2L3.4 8l3.8 3.8" fill="none" stroke="#1e7bc6" stroke-width="2.5"/></svg>
<svg style="left:916px;top:287px;" width="18" height="18" viewBox="0 0 18 18"><path d="M1.3 13.5V1.3H15.7V5.5M1.3 13.5H10" fill="none" stroke="#6d6d6d" stroke-width="1.3"/><path d="M1.3 4.5h2M1.3 7.5h2M13.5 4.5h2M5 1.3v2M9.5 1.3v2" stroke="#9a9a9a" stroke-width="1"/><path d="M1.3 10.3h8.5M5.2 9v4.5" stroke="#bdbdbd" stroke-width="1"/><rect x="5.5" y="4.5" width="6" height="3" fill="none" stroke="#26a08c" stroke-width="1.1"/><path d="M17.5 7.3L12.5 7.3 10 12H12.5L10 16.5 15.5 10.5H13.3z" fill="#f8c06a"/></svg>
<div style="left:914px;top:235px;width:191px;height:24px;box-sizing:border-box;border:3px solid #ff0000;background:transparent;border-radius:11px"></div>
<div style="left:905px;top:87px;width:41px;height:29px;box-sizing:border-box;border:3.5px solid #ff0000;background:transparent;border-radius:11px"></div>
</body></html>
